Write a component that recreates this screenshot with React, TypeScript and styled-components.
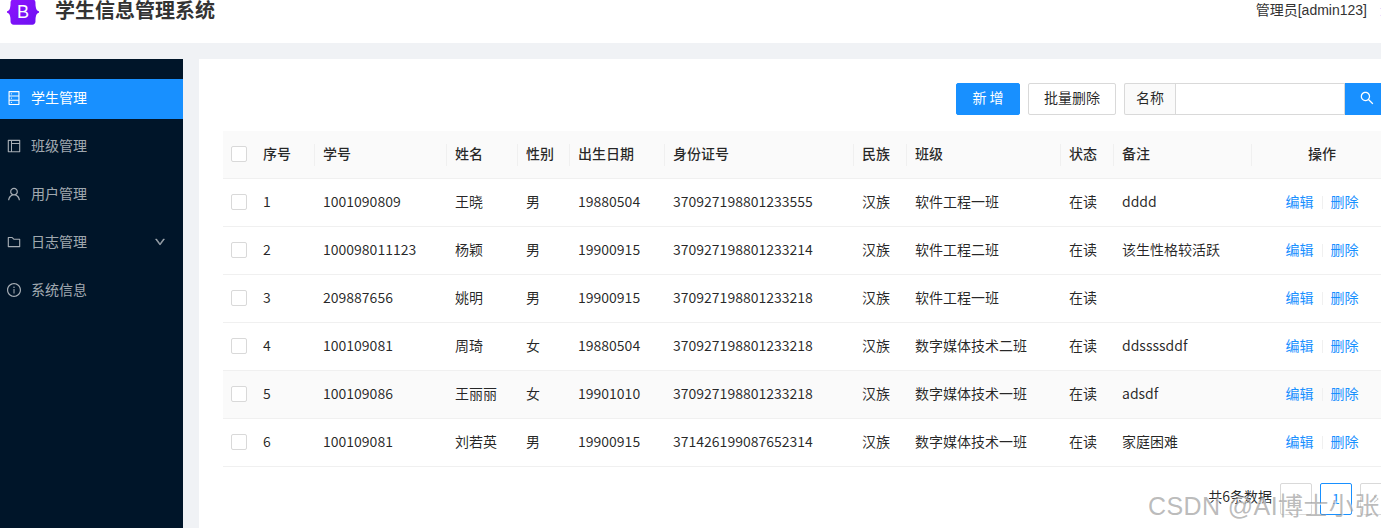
import React from "react";
import styled, { createGlobalStyle } from "styled-components";
import {
  AiOutlineDatabase,
  AiOutlineLayout,
  AiOutlineUser,
  AiOutlineFolder,
  AiOutlineInfoCircle,
  AiOutlineSearch,
  AiOutlineDown,
  AiOutlineLeft,
  AiOutlineRight,
} from "react-icons/ai";

const Global = createGlobalStyle`
  html, body { margin: 0; padding: 0; background: #f0f2f5; overflow: hidden; }
  * { box-sizing: border-box; }
  body {
    font-family: "Noto Sans CJK SC", "Liberation Sans", sans-serif;
    font-size: 14px;
    line-height: 22px;
    color: rgba(0, 0, 0, 0.85);
  }
`;

const Page = styled.div`
  position: relative;
  width: 1381px;
  height: 528px;
  overflow: hidden;
`;

const Wide = styled.div`
  width: 1416px;
  display: flex;
  flex-direction: column;
`;

const Header = styled.header`
  height: 43px;
  background: #fff;
  display: flex;
  align-items: flex-start;
  justify-content: space-between;
  padding: 0 8px 0 7px;
`;

const Brand = styled.div`
  display: flex;
  align-items: flex-start;
  gap: 16px;
`;

const LogoSvg = styled.svg`
  width: 32px;
  height: 26px;
  margin-top: -1px;
  display: block;
`;

const LogoLetter = styled.text`
  font-family: "Liberation Sans", sans-serif;
  font-size: 290px;
  fill: #fff;
  text-anchor: middle;
`;

const Title = styled.h1`
  margin: 0;
  font-size: 20px;
  line-height: 20px;
  font-weight: 700;
  color: #333;
`;

const UserArea = styled.div`
  display: flex;
  gap: 13px;
  line-height: 20px;
  color: #333;
  font-family: "Liberation Sans", "Noto Sans CJK SC", sans-serif;
`;

const Logout = styled.a`
  color: #1890ff;
`;

const Body = styled.div`
  display: flex;
  gap: 16px;
  margin-top: 16px;
`;

const Sidebar = styled.nav`
  width: 183px;
  height: 469px;
  flex: none;
  background: #001529;
  padding-top: 20px;
  display: flex;
  flex-direction: column;
  gap: 8px;
`;

const MenuItem = styled.div<{ $active?: boolean }>`
  height: 40px;
  display: flex;
  align-items: center;
  gap: 9px;
  padding: 0 16px 0 6px;
  color: ${(p) => (p.$active ? "#fff" : "rgba(255, 255, 255, 0.65)")};
  background: ${(p) => (p.$active ? "#1890ff" : "transparent")};
  svg {
    font-size: 16px;
    flex: none;
    margin-bottom: 2px;
  }
`;

const MenuLabel = styled.span`
  flex: 1;
  padding-bottom: 4px;
`;

const MoreIcon = styled(AiOutlineDown)`
  && {
    font-size: 12px;
    color: rgba(255, 255, 255, 0.45);
    stroke: currentColor;
    stroke-width: 70;
    margin-right: 1px;
  }
`;

const Main = styled.main`
  flex: 1;
  background: #fff;
  height: 469px;
  padding: 24px;
`;

const Toolbar = styled.div`
  display: flex;
  justify-content: flex-end;
  gap: 8px;
  height: 32px;
  margin-bottom: 16px;
`;

const Button = styled.button<{ $primary?: boolean; $w: number }>`
  width: ${(p) => p.$w}px;
  height: 32px;
  padding: 0 0 4px;
  border-radius: 2px;
  font: inherit;
  border: 1px solid ${(p) => (p.$primary ? "#1890ff" : "#d9d9d9")};
  background: ${(p) => (p.$primary ? "#1890ff" : "#fff")};
  color: ${(p) => (p.$primary ? "#fff" : "rgba(0, 0, 0, 0.85)")};
`;

const SearchGroup = styled.div`
  display: flex;
  width: 268px;
  height: 32px;
`;

const SearchLabel = styled.span`
  width: 51px;
  display: flex;
  align-items: center;
  justify-content: center;
  padding-bottom: 4px;
  background: #fafafa;
  border: 1px solid #d9d9d9;
  border-right: 0;
  border-radius: 2px 0 0 2px;
`;

const SearchInput = styled.input`
  flex: 1;
  min-width: 0;
  border: 1px solid #d9d9d9;
  outline: 0;
  background: #fff;
`;

const SearchButton = styled.button`
  width: 47px;
  border: 0;
  padding: 0 3px 2px 0;
  background: #1890ff;
  color: #fff;
  font-size: 16px;
  display: flex;
  align-items: center;
  justify-content: center;
`;

const columns = "32px 60px 132px 71px 52px 95px 189px 53px 154px 53px 138px 140px";

const HeadRow = styled.div`
  display: grid;
  grid-template-columns: ${columns};
  height: 48px;
  align-items: center;
  padding-bottom: 1px;
  background: #fafafa;
  border-bottom: 1px solid #f0f0f0;
`;

const Row = styled.div<{ $hover?: boolean }>`
  display: grid;
  grid-template-columns: ${columns};
  height: 48px;
  align-items: center;
  padding-bottom: 1px;
  background: ${(p) => (p.$hover ? "#fafafa" : "#fff")};
  border-bottom: 1px solid #f0f0f0;
`;

const CheckCell = styled.div`
  padding: 0 8px;
`;

const Cell = styled.div<{ $center?: boolean }>`
  padding: 0 8px 3px;
  white-space: nowrap;
  text-align: ${(p) => (p.$center ? "center" : "left")};
`;

const HeadCell = styled(Cell)<{ $sep?: boolean }>`
  position: relative;
  font-weight: 500;
  &::after {
    content: "";
    display: ${(p) => (p.$sep ? "block" : "none")};
    position: absolute;
    right: 0;
    top: 2px;
    width: 1px;
    height: 22px;
    background: #f0f0f0;
  }
`;

const Check = styled.span`
  display: block;
  width: 16px;
  height: 16px;
  background: #fff;
  border: 1px solid #d9d9d9;
  border-radius: 2px;
`;

const Ops = styled.div`
  display: flex;
  align-items: center;
  justify-content: center;
  gap: 8px;
`;

const Link = styled.a`
  color: #1890ff;
`;

const OpDivider = styled.span`
  width: 1px;
  height: 13px;
  margin-top: 3px;
  background: #f0f0f0;
`;

const Pager = styled.div`
  display: flex;
  justify-content: flex-end;
  align-items: center;
  gap: 8px;
  margin-top: 16px;
  height: 32px;
`;

const PagerTotal = styled.span`
  padding-bottom: 7px;
`;

const PageBox = styled.span<{ $active?: boolean }>`
  width: 32px;
  height: 32px;
  display: flex;
  align-items: center;
  justify-content: center;
  padding-bottom: ${(p) => (p.$active ? 3 : 0)}px;
  border-radius: 2px;
  font-size: ${(p) => (p.$active ? 14 : 10)}px;
  border: 1px solid ${(p) => (p.$active ? "#1890ff" : "#d9d9d9")};
  color: ${(p) => (p.$active ? "#1890ff" : "rgba(0, 0, 0, 0.25)")};
`;

const Watermark = styled.div`
  position: absolute;
  left: 1148px;
  top: 490px;
  font-family: "Liberation Sans", "Noto Sans CJK SC", sans-serif;
  font-size: 25px;
  letter-spacing: 0.4px;
  line-height: 32px;
  white-space: nowrap;
  color: rgba(130, 130, 130, 0.55);
  text-shadow: 1px 1px 1px rgba(255, 255, 255, 0.8);
`;

const menu = [
  { icon: <AiOutlineDatabase />, label: "学生管理", active: true },
  { icon: <AiOutlineLayout />, label: "班级管理" },
  { icon: <AiOutlineUser />, label: "用户管理" },
  { icon: <AiOutlineFolder />, label: "日志管理", more: true },
  { icon: <AiOutlineInfoCircle />, label: "系统信息" },
];

const heads = ["序号", "学号", "姓名", "性别", "出生日期", "身份证号", "民族", "班级", "状态", "备注"];

const rows = [
  ["1", "1001090809", "王晓", "男", "19880504", "370927198801233555", "汉族", "软件工程一班", "在读", "dddd"],
  ["2", "100098011123", "杨颖", "男", "19900915", "370927198801233214", "汉族", "软件工程二班", "在读", "该生性格较活跃"],
  ["3", "209887656", "姚明", "男", "19900915", "370927198801233218", "汉族", "软件工程一班", "在读", ""],
  ["4", "100109081", "周琦", "女", "19880504", "370927198801233218", "汉族", "数字媒体技术二班", "在读", "ddssssddf"],
  ["5", "100109086", "王丽丽", "女", "19901010", "370927198801233218", "汉族", "数字媒体技术一班", "在读", "adsdf"],
  ["6", "100109081", "刘若英", "男", "19900915", "371426199087652314", "汉族", "数字媒体技术一班", "在读", "家庭困难"],
];

function Logo() {
  return (
    <LogoSvg viewBox="0 0 512 408">
      <defs>
        <linearGradient id="bs" x1="0" y1="0" x2="1" y2="1">
          <stop offset="0" stopColor="#9013fe" />
          <stop offset="1" stopColor="#6b10f2" />
        </linearGradient>
      </defs>
      <path
        fill="url(#bs)"
        d="M106.342 0c-29.214 0-50.83 25.57-49.86 53.302.93 26.642-.242 61.149-8.928 89.29C38.84 170.82 24.111 188.693 0 190.99v25.934c24.111 2.297 38.84 20.17 47.554 48.4 8.686 28.14 9.859 62.648 8.929 89.29-.97 27.728 20.646 53.302 49.859 53.302h299.358c29.214 0 50.83-25.57 49.86-53.302-.93-26.642.242-61.15 8.928-89.29 8.715-28.23 23.444-46.103 47.512-48.4V190.99c-24.068-2.297-38.797-20.17-47.512-48.399-8.686-28.14-9.859-62.647-8.929-89.289C456.53 25.574 434.914 0 405.7 0H106.342z"
      />
      <LogoLetter x="256" y="295">B</LogoLetter>
    </LogoSvg>
  );
}

export default function App() {
  return (
    <Page>
      <Global />
      <Wide>
        <Header>
          <Brand>
            <Logo />
            <Title>学生信息管理系统</Title>
          </Brand>
          <UserArea>
            <span>管理员[admin123]</span>
            <Logout>退出</Logout>
          </UserArea>
        </Header>
        <Body>
          <Sidebar>
            {menu.map((m) => (
              <MenuItem key={m.label} $active={m.active}>
                {m.icon}
                <MenuLabel>{m.label}</MenuLabel>
                {m.more && <MoreIcon />}
              </MenuItem>
            ))}
          </Sidebar>
          <Main>
            <Toolbar>
              <Button $primary $w={64}>新 增</Button>
              <Button $w={88}>批量删除</Button>
              <SearchGroup>
                <SearchLabel>名称</SearchLabel>
                <SearchInput />
                <SearchButton><AiOutlineSearch /></SearchButton>
              </SearchGroup>
            </Toolbar>
            <HeadRow>
              <CheckCell><Check /></CheckCell>
              {heads.map((h) => (
                <HeadCell key={h} $sep>{h}</HeadCell>
              ))}
              <HeadCell $center>操作</HeadCell>
            </HeadRow>
            {rows.map((r) => (
              <Row key={r[0]} $hover={r[0] === "5"}>
                <CheckCell><Check /></CheckCell>
                {r.map((c, i) => (
                  <Cell key={i}>{c}</Cell>
                ))}
                <Cell>
                  <Ops>
                    <Link>编辑</Link>
                    <OpDivider />
                    <Link>删除</Link>
                  </Ops>
                </Cell>
              </Row>
            ))}
            <Pager>
              <PagerTotal>共6条数据</PagerTotal>
              <PageBox><AiOutlineLeft /></PageBox>
              <PageBox $active>1</PageBox>
              <PageBox><AiOutlineRight /></PageBox>
            </Pager>
          </Main>
        </Body>
      </Wide>
      <Watermark>CSDN @AI博士小张</Watermark>
    </Page>
  );
}
